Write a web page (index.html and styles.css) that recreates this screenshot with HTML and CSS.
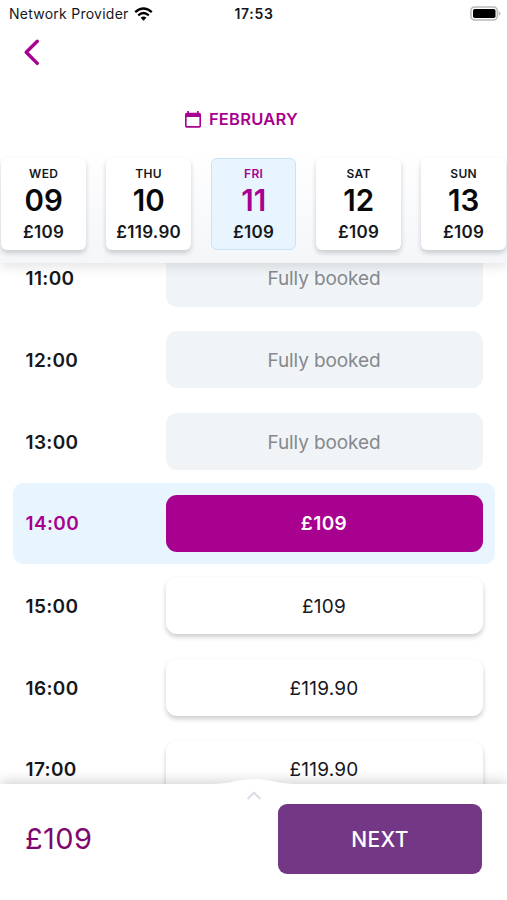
FILE: index.html
```html
<!DOCTYPE html>
<html lang="en">
<head>
<meta charset="utf-8">
<meta name="viewport" content="width=device-width">
<title>Choose a time</title>
<link rel="stylesheet" href="styles.css">
</head>
<body>
<div class="screen">
  <header class="header">
    <div class="status">
      <div class="carrier"><span class="carrier-name">Network Provider</span>
        <svg class="wifi" width="19" height="14" viewBox="0 0 19 14" fill="none" stroke="#000" stroke-width="2.3"><path d="M1.2 5.2Q9.5-2.3 17.8 5.2M4.2 8.3Q9.5 3.8 14.8 8.3"/><path d="M6.6 10.7Q9.5 8.2 12.4 10.7L9.5 13.7Z" fill="#000" stroke="none"/></svg>
      </div>
      <div class="clock">17:53</div>
      <svg class="battery" width="31" height="15" viewBox="0 0 31 15"><rect x=".9" y="1" width="26.4" height="13" rx="3.8" fill="#fff" stroke="#b9b9b9" stroke-width="1.5"/><rect x="3" y="3" width="22.5" height="9" rx="1.8"/><path d="M28.7 5.2Q30.5 6 30.5 7.5T28.7 9.8Z" fill="#b9b9b9"/></svg>
    </div>
    <nav class="nav">
      <svg width="18" height="28" viewBox="0 0 18 28" fill="none" stroke="#a8008f" stroke-width="3.4" stroke-linecap="round" stroke-linejoin="round"><path d="M15.3 3.2 4.2 14.3 15.3 25.4"/></svg>
    </nav>
    <div class="month">
      <svg width="16" height="17" viewBox="0 0 16 17"><path fill="#a8008f" fill-rule="evenodd" d="M2.3 0H4V1.7H12V0H13.7V1.7H14.3Q16 1.7 16 3.4V15.1Q16 16.7 14.3 16.7H1.7Q0 16.7 0 15.1V3.4Q0 1.7 1.7 1.7H2.3ZM1.6 6V15.1H14.4V6Z"/></svg>
      <span class="month-name">FEBRUARY</span>
    </div>
    <div class="dates">
      <div class="date"><span class="day">WED</span><span class="num">09</span><span class="fare">£109</span></div>
      <div class="date"><span class="day">THU</span><span class="num">10</span><span class="fare">£119.90</span></div>
      <div class="date date-selected"><span class="day">FRI</span><span class="num">11</span><span class="fare">£109</span></div>
      <div class="date"><span class="day">SAT</span><span class="num">12</span><span class="fare">£109</span></div>
      <div class="date"><span class="day">SUN</span><span class="num">13</span><span class="fare">£109</span></div>
    </div>
  </header>
  <main class="times">
    <div class="list">
      <div class="row"><span class="time">11:00</span><div class="slot slot-full">Fully booked</div></div>
      <div class="row"><span class="time">12:00</span><div class="slot slot-full">Fully booked</div></div>
      <div class="row"><span class="time">13:00</span><div class="slot slot-full">Fully booked</div></div>
      <div class="row row-selected"><span class="time">14:00</span><div class="slot slot-selected">£109</div></div>
      <div class="row"><span class="time">15:00</span><div class="slot">£109</div></div>
      <div class="row"><span class="time">16:00</span><div class="slot">£119.90</div></div>
      <div class="row"><span class="time">17:00</span><div class="slot">£119.90</div></div>
    </div>
  </main>
  <footer class="footer">
    <svg class="handle" width="90" height="24" viewBox="0 0 90 24"><path d="M0 8C24 8 28 3 45 3S66 8 90 8V24H0Z" fill="#fff"/><path d="M38.5 23 45 16.8 51.5 23" fill="none" stroke="#d9dee5" stroke-width="2.2"/></svg>
    <div class="total">£109</div>
    <div class="next">NEXT</div>
  </footer>
</div>
</body>
</html>
```

FILE: styles.css
```css
* { box-sizing: border-box; }
body { margin: 0; background: #fff; font-family: Inter, "Liberation Sans", sans-serif; color: #15181c; }
.screen { width: 507px; height: 900px; display: flex; flex-direction: column; overflow: hidden; }

.header { position: relative; z-index: 1; flex: none; height: 263px; background: linear-gradient(#fff 150px, #f4f6f9 263px); box-shadow: 0 3px 12px rgba(0, 0, 0, .12); }
.status { display: grid; grid-template-columns: 1fr auto 1fr; align-items: center; height: 27px; padding: 0 8px 0 9px; }
.carrier { display: flex; align-items: center; gap: 5px; font-size: 14px; }
.carrier-name { letter-spacing: .25px; white-space: nowrap; }
.clock { font-size: 14px; font-weight: 600; letter-spacing: .65px; }
.battery { justify-self: end; margin-right: -2px; }
.nav { height: 82px; padding: 11px 0 0 22px; }
.nav svg, .month svg, .handle { display: block; }
.month { display: flex; align-items: center; justify-content: center; gap: 8px; height: 20px; padding-right: 24px; color: #a8008f; }
.month-name { font-size: 16.5px; font-weight: 600; letter-spacing: .25px; }
.dates { display: grid; grid-template-columns: repeat(5, 84.5px); gap: 20.5px; padding: 29px 0 0 1.4px; }
.date { display: flex; flex-direction: column; align-items: center; height: 92px; padding-top: 8px; border: 1px solid transparent; border-radius: 6px; background: #fff; box-shadow: 0 3px 5px rgba(20, 30, 40, .2); }
.date-selected { background: #e8f5ff; border-color: #c6e3f8; box-shadow: none; }
.day { font-size: 12px; line-height: 14px; font-weight: 600; letter-spacing: .3px; }
.num { font-size: 29.5px; line-height: 36px; margin-top: 1px; font-weight: 570; color: #08090b; }
.fare { font-size: 17px; line-height: 22px; margin-top: 3px; font-weight: 560; letter-spacing: .3px; }
.date-selected .day, .date-selected .num { color: #a8008f; }

.times { flex: none; height: 521px; overflow: hidden; }
.list { margin-top: -25.9px; padding: 0 12.5px; }
.row { display: flex; align-items: center; justify-content: space-between; height: 81.9px; padding: 0 12px 0 13px; border-radius: 10px; }
.row-selected { height: 81px; margin-bottom: .9px; background: #e8f5ff; }
.time { padding-top: 1px; font-size: 19px; font-weight: 560; letter-spacing: .35px; }
.row-selected .time { color: #a8008f; }
.slot { display: flex; align-items: center; justify-content: center; width: 317px; height: 57px; padding-top: 1px; border-radius: 11px; font-size: 19px; letter-spacing: .2px; background: #fff; box-shadow: 0 3px 5px rgba(0, 0, 0, .2); }
.slot-full { background: #f0f4f7; color: #85898d; letter-spacing: -.1px; box-shadow: none; }
.slot-selected { background: #a8008f; color: #fff; font-weight: 560; letter-spacing: .4px; box-shadow: none; }

.footer { position: relative; z-index: 1; flex: 1; display: flex; align-items: flex-start; justify-content: space-between; padding: 20px 25px 0 25px; background: #fff; box-shadow: 0 -3px 12px rgba(0, 0, 0, .17); }
.handle { position: absolute; left: 209px; top: -8px; }
.total { font-size: 29px; line-height: 70px; letter-spacing: .4px; color: #7f0870; }
.next { width: 204px; height: 70px; border-radius: 9px; background: #743786; color: #fff; font-size: 21px; line-height: 71px; font-weight: 500; letter-spacing: .4px; text-align: center; }
```
